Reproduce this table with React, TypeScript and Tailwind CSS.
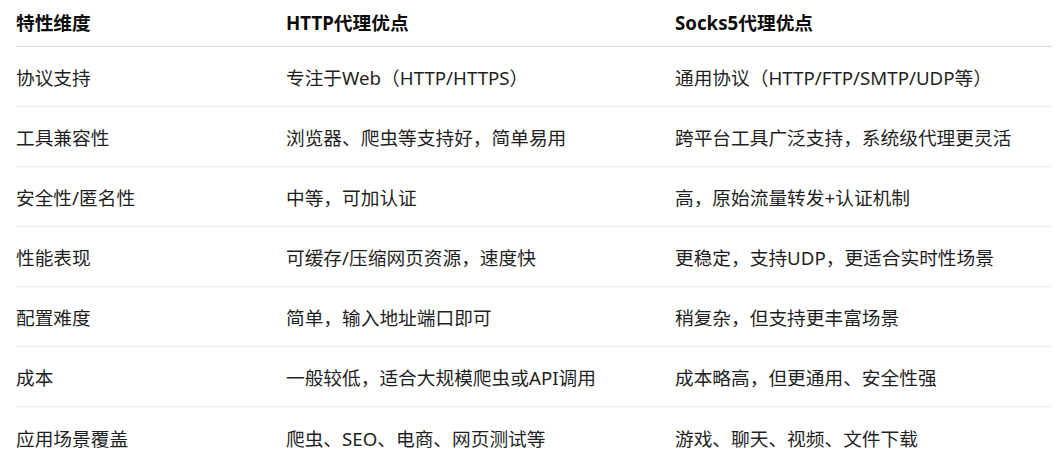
const rows: [string, string, string][] = [
  ['协议支持', '专注于Web（HTTP/HTTPS）', '通用协议（HTTP/FTP/SMTP/UDP等）'],
  ['工具兼容性', '浏览器、爬虫等支持好，简单易用', '跨平台工具广泛支持，系统级代理更灵活'],
  ['安全性/匿名性', '中等，可加认证', '高，原始流量转发+认证机制'],
  ['性能表现', '可缓存/压缩网页资源，速度快', '更稳定，支持UDP，更适合实时性场景'],
  ['配置难度', '简单，输入地址端口即可', '稍复杂，但支持更丰富场景'],
  ['成本', '一般较低，适合大规模爬虫或API调用', '成本略高，但更通用、安全性强'],
  ['应用场景覆盖', '爬虫、SEO、电商、网页测试等', '游戏、聊天、视频、文件下载'],
];

export default function App() {
  return (
    <div
      className="min-h-screen bg-white px-4"
      style={{ fontFamily: "'Segoe UI', 'Noto Sans', 'Noto Sans CJK SC', sans-serif" }}
    >
      <div className="w-[1036px] text-[18.7px]">
        <div className="grid grid-cols-[270px_389px_1fr] h-[47px] items-center border-b border-[#d9d9d9] font-bold text-[#0d0d0d]">
          <div>特性维度</div>
          <div>HTTP代理优点</div>
          <div>Socks5代理优点</div>
        </div>
        {rows.map((r, i) => (
          <div
            key={i}
            className={`grid grid-cols-[270px_389px_1fr] h-[60px] pt-1 items-center text-[#1f1f1f] ${
              i < rows.length - 1 ? 'border-b border-[#ececec]' : ''
            }`}
          >
            <div>{r[0]}</div>
            <div>{r[1]}</div>
            <div>{r[2]}</div>
          </div>
        ))}
      </div>
    </div>
  );
}
